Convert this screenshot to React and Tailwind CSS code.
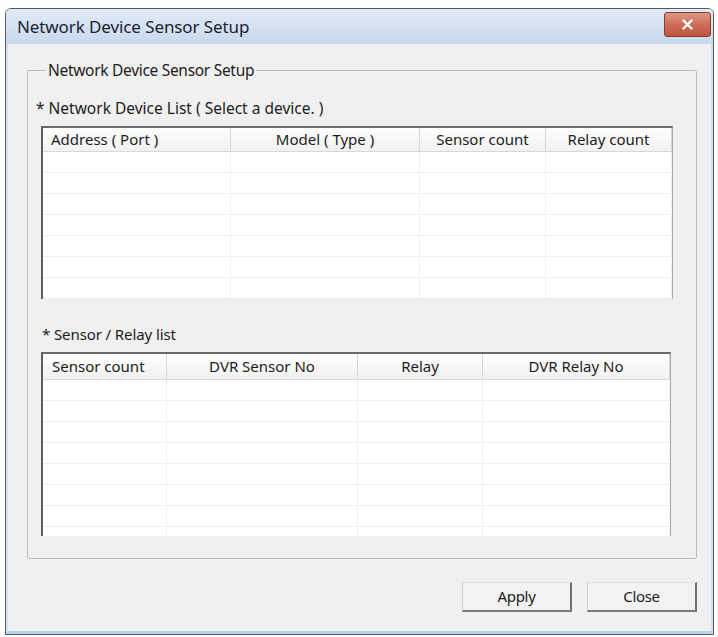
import React from "react";

const deviceCols = [
  { label: "Address ( Port )", w: "w-[188px]", align: "text-left pl-[8px]" },
  { label: "Model ( Type )", w: "w-[189px]", align: "text-center" },
  { label: "Sensor count", w: "w-[126px]", align: "text-center" },
  { label: "Relay count", w: "flex-1", align: "text-center" },
];

const relayCols = [
  { label: "Sensor count", w: "w-[124px]", align: "text-left pl-[9px]" },
  { label: "DVR Sensor No", w: "w-[191px]", align: "text-center" },
  { label: "Relay", w: "w-[125px]", align: "text-center" },
  { label: "DVR Relay No", w: "flex-1", align: "text-center" },
];

const ListView = ({ cols, rows, width, height, headH }) => {
  return (
    <div
      className={`${width} ${height} flex flex-col overflow-hidden border-t-2 border-l-2 border-r border-t-[#6b6b6b] border-l-[#5f5f5f] border-r-[#a9a9a9] bg-white`}
    >
      <div className={`flex ${headH} shrink-0 border-b border-[#d8d8d8] bg-gradient-to-b from-white to-[#f1f1f1]`}>
        {cols.map((c, i) => (
          <div
            key={i}
            className={`${c.w} ${c.align} flex items-center ${c.align.includes("center") ? "justify-center" : ""} border-r border-[#d6d6d6] text-[15px] text-[#1c1c1c]`}
          >
            {c.label}
          </div>
        ))}
      </div>
      {Array.from({ length: rows }).map((_, r) => (
        <div key={r} className="flex h-[21px] shrink-0 border-b border-[#efefef]">
          {cols.map((c, i) => (
            <div key={i} className={`${c.w} border-r border-[#f1f1f1]`} />
          ))}
        </div>
      ))}
    </div>
  );
};

const Button = ({ children }) => (
  <button className="w-[110px] h-[30px] border-t border-l border-t-[#e2e2e2] border-l-[#d0d0d0] border-r-2 border-b-2 border-r-[#6f6f6f] border-b-[#7a7a7a] bg-[#f2f2f2] text-[15px] tracking-[-0.3px] text-[#1c1c1c]">
    {children}
  </button>
);

export default function App() {
  return (
    <div className="w-[718px] h-[637px] bg-white pl-[5px] pr-[4px] pt-[8px] pb-[2px] font-['Noto_Sans',sans-serif]">
      <div className="h-full flex flex-col rounded-t-[6px] border border-[#4f5b68] overflow-hidden">
        {/* title bar */}
        <div className="h-[35px] shrink-0 flex items-center justify-between pl-[11px] pr-[2px] bg-gradient-to-b from-[#e2ebf6] to-[#c9d9ec]">
          <span className="text-[17px] text-[#1a2232] tracking-[-0.1px]">Network Device Sensor Setup</span>
          <div className="w-[47px] h-[25px] mt-[-4px] flex items-center justify-center rounded-[3px] border border-[#8e3b2f] bg-gradient-to-b from-[#dc9a88] via-[#cd6d58] to-[#c0543d]">
            <svg width="13" height="11" viewBox="0 0 13 11">
              <path d="M2.5 1.5 L10.5 9.5 M10.5 1.5 L2.5 9.5" stroke="#ffffff" strokeWidth="2.4" strokeLinecap="round" />
            </svg>
          </div>
        </div>

        {/* client area */}
        <div className="flex-1 flex flex-col border-x-2 border-b-[3px] border-x-[#d3e0ef] border-b-[#b9d1ea] bg-[#f0f0f0]">
          <fieldset className="mt-[17px] ml-[19px] mr-[14px] border border-[#bdbdbd] rounded-[2px] pl-[8px] pb-[22px]">
            <legend className="ml-[10px] px-[2px] h-[18px] leading-[18px] text-[15.5px] tracking-[-0.3px] text-[#1c1c1c]">
              Network Device Sensor Setup
            </legend>

            <div className="mt-[21px] h-[16px] leading-[16px] text-[15.5px] tracking-[0px] text-[#1c1c1c]">
              * Network Device List ( Select a device. )
            </div>
            <div className="mt-[10px] ml-[5px]">
              <ListView cols={deviceCols} rows={7} width="w-[632px]" height="h-[173px]" headH="h-[24px]" />
            </div>

            <div className="mt-[27px] ml-[6px] h-[16px] leading-[16px] text-[15px] tracking-[-0.1px] text-[#1c1c1c]">
              * Sensor / Relay list
            </div>
            <div className="mt-[10px] ml-[5px]">
              <ListView cols={relayCols} rows={8} width="w-[630px]" height="h-[184px]" headH="h-[26px]" />
            </div>
          </fieldset>

          <div className="flex justify-end gap-[15px] mt-[23px] mr-[14px]">
            <Button>Apply</Button>
            <Button>Close</Button>
          </div>
        </div>
      </div>
    </div>
  );
}
